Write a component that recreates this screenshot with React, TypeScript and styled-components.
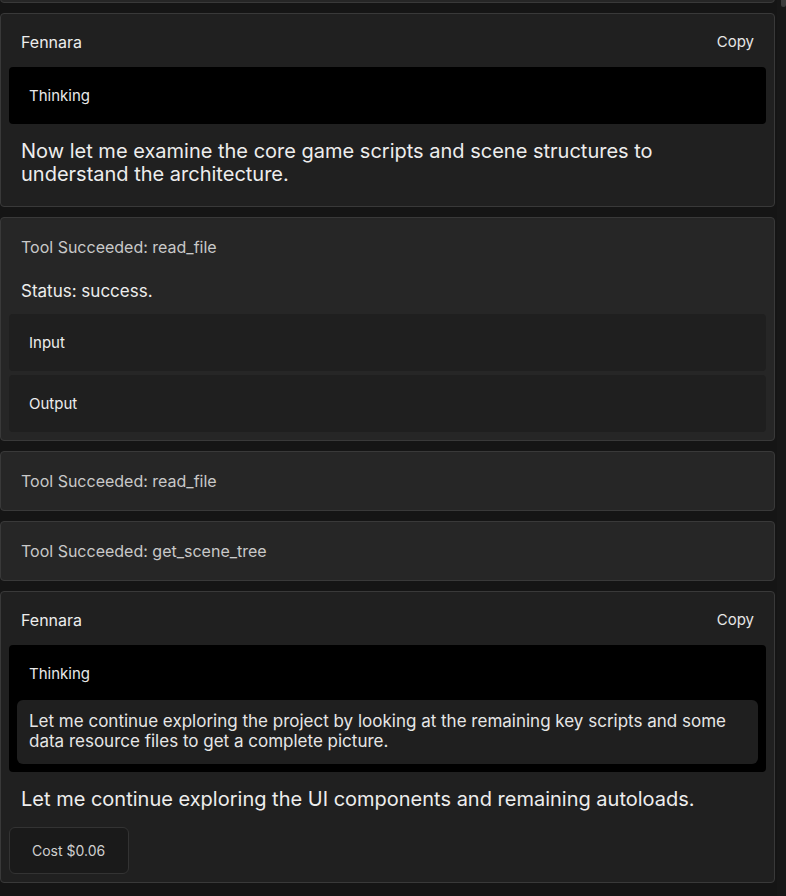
import React from "react";
import styled, { createGlobalStyle } from "styled-components";

const GlobalStyle = createGlobalStyle`
  html, body {
    margin: 0;
    padding: 0;
    background: #151515;
  }
  body {
    font-family: Inter, "Noto Sans", "Liberation Sans", sans-serif;
    color: #ececec;
    -webkit-font-smoothing: antialiased;
  }
`;

const Viewport = styled.div`
  display: flex;
  height: 896px;
  overflow: hidden;
  background: #151515;
`;

const Feed = styled.div`
  flex: 1;
  display: flex;
  flex-direction: column;
  gap: 10px;
  padding-right: 2px;
  margin-top: -57px;
`;

const ScrollTrack = styled.div`
  width: 9px;
  background: #171717;
  display: flex;
  justify-content: flex-end;
`;

const ScrollThumb = styled.div`
  width: 5px;
  height: 7px;
  border-radius: 0 0 3px 3px;
  background: #3c3c3c;
`;

const Card = styled.div<{ $tone?: "plain" | "tool"; $pad?: boolean }>`
  background: ${(p) => (p.$tone === "tool" ? "#262626" : "#202020")};
  border: 1px solid #393939;
  border-radius: 4px;
  display: flex;
  flex-direction: column;
  padding: 0 8px ${(p) => (p.$pad ? "8px" : "0")};
`;

// the card above, scrolled almost out of view
const PrevCard = styled(Card)`
  height: 60px;
  box-sizing: border-box;
  flex-shrink: 0;
`;

const Header = styled.div`
  display: flex;
  align-items: center;
  justify-content: space-between;
  box-sizing: border-box;
  height: 53px;
  padding: 2px 12px 0;
  font-size: 16px;
  color: #ededed;
`;

const CopyButton = styled.span`
  font-size: 15px;
  color: #e6e6e6;
`;

const ToolTitle = styled.div`
  height: 58px;
  display: flex;
  align-items: center;
  padding: 0 12px;
  font-size: 16px;
  color: #c9c9c9;
`;

const Thinking = styled.div`
  background: #000;
  border-radius: 4px;
  display: flex;
  flex-direction: column;
  padding: 0 8px;
`;

const ThinkingLabel = styled.div`
  height: 57px;
  display: flex;
  align-items: center;
  padding: 0 12px;
  font-size: 15px;
  color: #e8e8e8;
`;

const ThinkingBody = styled.div`
  margin: -2px 0 8px;
  background: #1f1f1f;
  border-radius: 6px;
  padding: 11px 12px 13px;
  font-size: 17px;
  line-height: 20px;
  color: #e6e6e6;
`;

const Message = styled.p`
  margin: 0;
  padding: 16px 12px 12px;
  font-size: 20px;
  line-height: 23px;
  color: #ededed;
`;

const Status = styled.p`
  margin: 0;
  padding: 4px 12px 12px;
  font-size: 17px;
  line-height: 22px;
  color: #ededed;
`;

const Section = styled.div`
  background: #1f1f1f;
  border-radius: 4px;
  height: 57px;
  display: flex;
  align-items: center;
  padding: 0 20px;
  font-size: 15px;
  color: #ededed;
  & + & {
    margin-top: 4px;
  }
`;

const CostChip = styled.div`
  align-self: flex-start;
  margin-top: 4px;
  width: 120px;
  height: 47px;
  box-sizing: border-box;
  display: flex;
  align-items: center;
  padding-left: 22px;
  background: #1a1a1a;
  border: 1px solid #333;
  border-radius: 6px;
  font-size: 14px;
  color: #cfcfcf;
`;

function ToolCard(props: { name: string }) {
  return (
    <Card $tone="tool">
      <ToolTitle>Tool Succeeded: {props.name}</ToolTitle>
    </Card>
  );
}

export default function App() {
  return (
    <>
      <GlobalStyle />
      <Viewport>
        <Feed>
          <PrevCard $tone="tool" />
          <Card $pad>
            <Header>
              <span>Fennara</span>
              <CopyButton>Copy</CopyButton>
            </Header>
            <Thinking>
              <ThinkingLabel>Thinking</ThinkingLabel>
            </Thinking>
            <Message>
              Now let me examine the core game scripts and scene structures to
              understand the architecture.
            </Message>
          </Card>
          <Card $tone="tool" $pad>
            <ToolTitle>Tool Succeeded: read_file</ToolTitle>
            <Status>Status: success.</Status>
            <Section>Input</Section>
            <Section>Output</Section>
          </Card>
          <ToolCard name="read_file" />
          <ToolCard name="get_scene_tree" />
          <Card $pad>
            <Header>
              <span>Fennara</span>
              <CopyButton>Copy</CopyButton>
            </Header>
            <Thinking>
              <ThinkingLabel>Thinking</ThinkingLabel>
              <ThinkingBody>
                Let me continue exploring the project by looking at the
                remaining key scripts and some data resource files to get a
                complete picture.
              </ThinkingBody>
            </Thinking>
            <Message>
              Let me continue exploring the UI components and remaining
              autoloads.
            </Message>
            <CostChip>Cost $0.06</CostChip>
          </Card>
        </Feed>
        <ScrollTrack>
          <ScrollThumb />
        </ScrollTrack>
      </Viewport>
    </>
  );
}
